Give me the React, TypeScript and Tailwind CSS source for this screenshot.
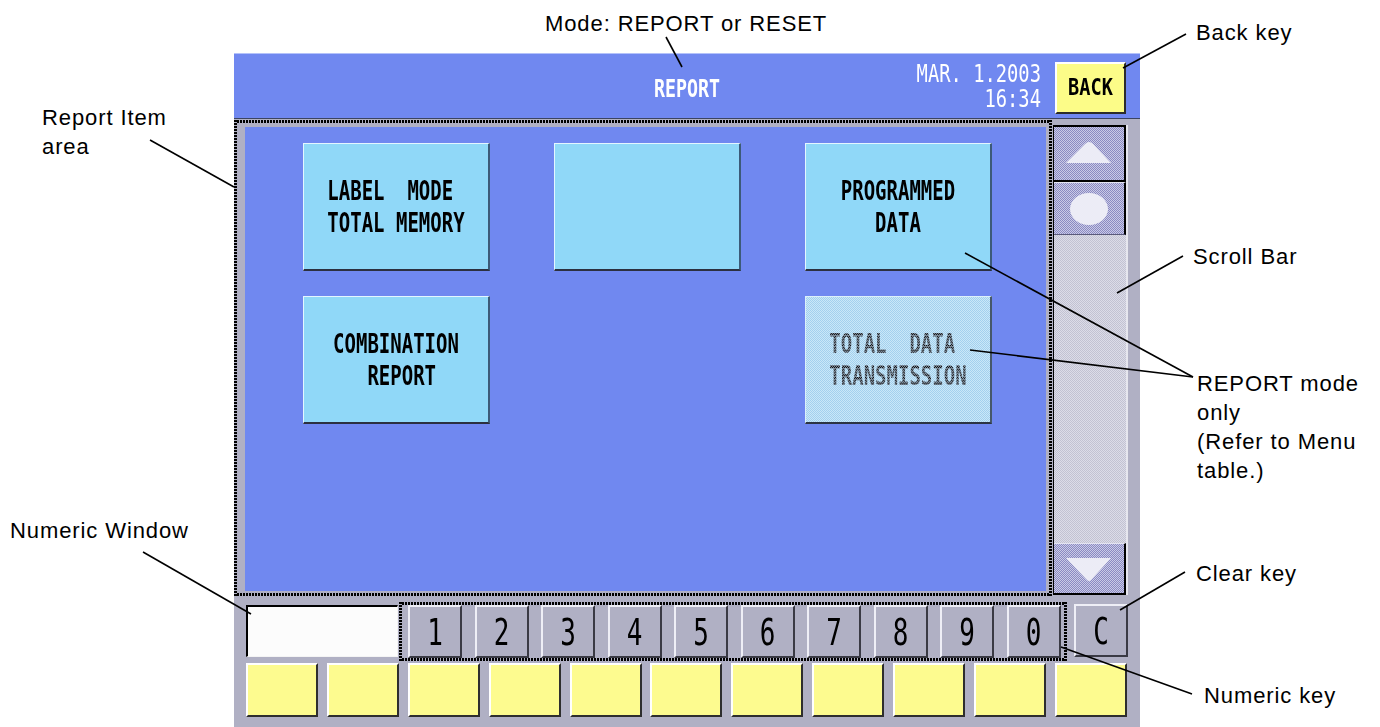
import React from "react";

// dotted frame: outer layer gives the left/right edges (dots stacked vertically),
// inner layer gives the top/bottom edges (dots in a row)
const dotsV =
  "bg-black bg-[image:linear-gradient(transparent_2px,#b0b0c4_2px)] bg-[length:3px_3px]";
const dotsH =
  "bg-black bg-[image:linear-gradient(90deg,transparent_2px,#b0b0c4_2px)] bg-[length:3px_3px]";

const mono = "font-['DejaVu_Sans_Mono','Liberation_Mono',monospace]";

const note =
  "absolute whitespace-pre font-['Liberation_Sans',Arial,sans-serif] text-[22px] leading-[29px] tracking-[0.9px] text-black";

function Card({ lines, disabled }: { lines: string[]; disabled?: boolean }) {
  return (
    <div
      className={`flex h-[128px] w-[187px] items-center justify-center border-t border-l border-r-2 border-b-2 ${
        disabled
          ? "border-t-[#dcf0fa] border-l-[#dcf0fa] border-r-[#46586a] border-b-[#2c3444] bg-[image:repeating-conic-gradient(#a4d0ee_0%_25%,#cae8f8_0%_50%)] bg-[length:2px_2px]"
          : "border-t-[#e4f6ff] border-l-[#e4f6ff] border-r-[#3c5a78] border-b-[#2c3040] bg-[#90d8f8]"
      }`}
    >
      <div
        className={`scale-y-[1.37] whitespace-pre text-center ${mono} text-[19px] font-bold leading-[22.6px] ${
          disabled
            ? "bg-[image:repeating-conic-gradient(#101010_0%_25%,#7c8a9a_0%_50%)] bg-[length:2px_2px] bg-clip-text text-transparent"
            : "text-black"
        }`}
      >
        {lines.join("\n")}
      </div>
    </div>
  );
}

function NumKey({ label }: { label: string }) {
  return (
    <div className="flex h-[53px] w-[54px] shrink-0 items-center justify-center border-t-2 border-l-2 border-r-2 border-b-2 border-t-[#eeeef6] border-l-[#eeeef6] border-r-[#3a3a44] border-b-[#3a3a44] bg-[#b0b0c4]">
      <span className={`scale-y-[1.42] ${mono} text-[26px] leading-none text-black`}>{label}</span>
    </div>
  );
}

function DottedFrame({ className, children }: { className: string; children?: React.ReactNode }) {
  return (
    <div className={`px-[3px] ${dotsV} ${className}`}>
      <div className={`h-full py-[3px] ${dotsH}`}>
        <div className="h-full bg-[#b0b0c4]">{children}</div>
      </div>
    </div>
  );
}

export default function App() {
  const digits = ["1", "2", "3", "4", "5", "6", "7", "8", "9", "0"];
  const softKeys = Array.from({ length: 11 }, (_, i) => i);

  return (
    <div className="relative h-[727px] w-[1380px] overflow-hidden bg-white pl-[234px] pt-[53px]">
      {/* device screen */}
      <div className="flex h-[674px] w-[906px] flex-col bg-[#b0b0c4]">
        {/* title bar */}
        <div className="grid h-[66px] grid-cols-[1fr_auto_1fr] items-center border-t border-b border-t-[#b4c2fa] border-b-[#3c4460] bg-[#7088f0]">
          <div />
          <span className={`mt-[5px] scale-y-[1.35] ${mono} text-[18.3px] font-bold text-white`}>REPORT</span>
          <div className="flex items-center justify-end gap-[14px] pr-[14px]">
            <div className={`scale-y-[1.35] whitespace-pre text-right ${mono} text-[18.8px] leading-[18.5px] text-white`}>
              {"MAR. 1.2003\n16:34"}
            </div>
            <div className="mt-[3px] flex h-[52px] w-[71px] items-center justify-center border-t-2 border-l-2 border-r-2 border-b-2 border-t-white border-l-white border-r-[#2c2c2c] border-b-[#2c2c2c] bg-[#fcfc88]">
              <span className={`scale-y-[1.2] ${mono} text-[18.6px] font-bold text-black`}>BACK</span>
            </div>
          </div>
        </div>

        {/* report items + scroll bar */}
        <div className="flex h-[477px]">
          <DottedFrame className="mt-[1px] h-[476px] w-[818px]">
            <div className="flex h-full w-full pb-[2px] pl-[8px] pr-[3px] pt-[4px]">
              <div className="flex-1 bg-[#7088f0] pl-[58px] pt-[16px]">
                <div className="grid grid-cols-[repeat(3,187px)] gap-x-[64px] gap-y-[25px]">
                  <Card lines={["LABEL  MODE ", "TOTAL MEMORY"]} />
                  <Card lines={[]} />
                  <Card lines={["PROGRAMMED", "DATA"]} />
                  <Card lines={["COMBINATION", " REPORT"]} />
                  <div />
                  <Card lines={["TOTAL  DATA ", "TRANSMISSION"]} disabled />
                </div>
              </div>
            </div>
          </DottedFrame>

          <div className="ml-[1px] mt-[6px] flex h-[470px] w-[75px] flex-col border-l border-l-black border-r-2 border-r-[#e6e6ee]">
            <div className="flex h-[57px] items-center justify-center border-t-2 border-r-2 border-b-2 border-black bg-[image:repeating-conic-gradient(#8a8ac2_0%_25%,#cacae6_0%_50%)] bg-[length:2px_2px]">
              <svg width="68" height="53" viewBox="0 0 68 53">
                <path d="M11 36 L30 17 Q34 13 38 17 L56 36 Z" fill="#ececf6" />
              </svg>
            </div>
            <div className="flex h-[53px] items-center justify-center border-t border-r-2 border-b border-t-[#e4e4f2] border-r-black border-b-[#5a5a7a] bg-[image:repeating-conic-gradient(#8a8ac2_0%_25%,#cacae6_0%_50%)] bg-[length:2px_2px]">
              <svg width="68" height="51" viewBox="0 0 68 51">
                <ellipse cx="34" cy="26" rx="19" ry="16" fill="#ececf6" />
              </svg>
            </div>
            <div className="flex-1 bg-[image:repeating-conic-gradient(#c2c2d2_0%_25%,#dcdce8_0%_50%)] bg-[length:2px_2px]" />
            <div className="flex h-[52px] items-center justify-center border-t border-r-2 border-b-2 border-t-[#e4e4f2] border-r-black border-b-black bg-[image:repeating-conic-gradient(#8a8ac2_0%_25%,#cacae6_0%_50%)] bg-[length:2px_2px]">
              <svg width="68" height="49" viewBox="0 0 68 49">
                <path d="M11 14 L56 14 L36 36 Q34 38 32 36 Z" fill="#ececf6" />
              </svg>
            </div>
          </div>
        </div>

        {/* numeric window + numeric keys + clear */}
        <div className="flex h-[65px] pl-[12px] pt-[6px]">
          <div className="mt-[3px] h-[52px] w-[152px] border-t-2 border-l-2 border-r border-b border-t-black border-l-black border-r-[#f4f4f4] border-b-[#f4f4f4] bg-[#fcfcfc]" />
          <DottedFrame className="ml-[1px] h-[59px] w-[668px]">
            <div className="flex h-full gap-[12.5px] pl-[6px]">
              {digits.map((d) => (
                <NumKey key={d} label={d} />
              ))}
            </div>
          </DottedFrame>
          <div className="ml-[7px] mt-[2px]">
            <NumKey label="C" />
          </div>
        </div>

        {/* soft keys */}
        <div className="flex gap-[8.9px] pl-[12px] pt-[2px]">
          {softKeys.map((k) => (
            <div
              key={k}
              className="h-[54px] w-[72px] shrink-0 border-t-2 border-l-2 border-r-2 border-b-2 border-t-white border-l-white border-r-[#2e2e2e] border-b-[#2e2e2e] bg-[#fdfb8f]"
            />
          ))}
        </div>
      </div>

      {/* callouts */}
      <div className={`${note} left-[545px] top-[9px]`}>Mode: REPORT or RESET</div>
      <div className={`${note} left-[1196px] top-[18px]`}>Back key</div>
      <div className={`${note} left-[42px] top-[103px]`}>{"Report Item\narea"}</div>
      <div className={`${note} left-[1193px] top-[242px]`}>Scroll Bar</div>
      <div className={`${note} left-[1197px] top-[369px]`}>{"REPORT mode\nonly\n(Refer to Menu\ntable.)"}</div>
      <div className={`${note} left-[10px] top-[516px]`}>Numeric Window</div>
      <div className={`${note} left-[1196px] top-[559px]`}>Clear key</div>
      <div className={`${note} left-[1204px] top-[681px]`}>Numeric key</div>

      <svg className="pointer-events-none absolute left-0 top-0" width="1380" height="727" viewBox="0 0 1380 727">
        <g stroke="#000" strokeWidth="1.6" fill="none">
          <line x1="666" y1="37" x2="682" y2="67" />
          <line x1="1186" y1="34" x2="1123" y2="68" />
          <line x1="150" y1="140" x2="234" y2="187" />
          <line x1="1183" y1="256" x2="1117" y2="293" />
          <line x1="965" y1="253" x2="1193" y2="377" />
          <line x1="970" y1="350" x2="1193" y2="377" />
          <line x1="143" y1="552" x2="251" y2="614" />
          <line x1="1185" y1="572" x2="1120" y2="610" />
          <line x1="1192" y1="694" x2="1061" y2="647" />
        </g>
      </svg>
    </div>
  );
}
